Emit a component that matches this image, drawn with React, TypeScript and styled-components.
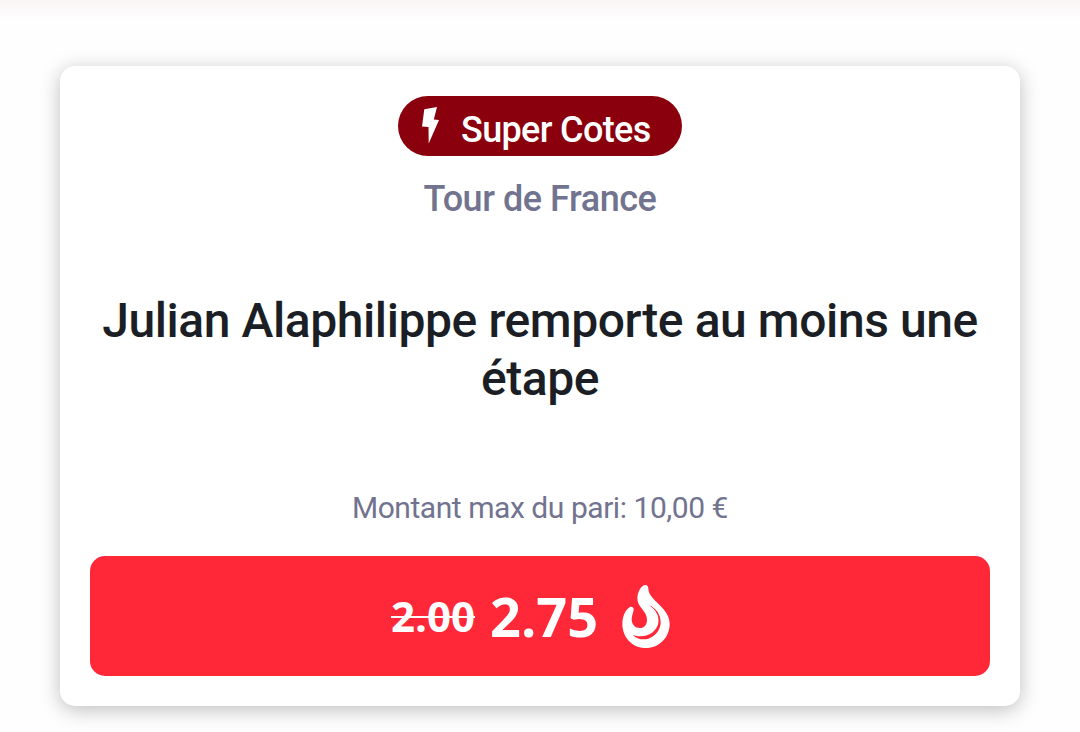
import styled, { createGlobalStyle } from 'styled-components';

const GlobalStyle = createGlobalStyle`
  *,
  *::before,
  *::after {
    box-sizing: border-box;
  }

  body {
    margin: 0;
    background-color: #fefefe;
    font-family: Roboto, 'Liberation Sans', sans-serif;
    overflow: hidden;
  }
`;

const Wrapper = styled.main`
  width: 1080px;
  height: 732px;
  padding: 66px 60px 26px;
  background-image: linear-gradient(#faf5f4, #fefefe 20px);
`;

const Card = styled.article`
  height: 640px;
  padding: 30px;
  display: flex;
  flex-direction: column;
  align-items: center;
  text-align: center;
  background-color: #ffffff;
  border-radius: 15px;
  box-shadow: 0 4px 20px rgba(0, 0, 0, 0.25);
`;

const Badge = styled.div`
  width: 284px;
  height: 60px;
  padding-left: 23px;
  display: flex;
  align-items: center;
  color: #ffffff;
  background-color: #8a000c;
  border-radius: 30px;
`;

const BadgeLabel = styled.span`
  margin: 7px 0 0 22px;
  font-size: 36px;
  font-weight: 500;
  line-height: 42px;
  letter-spacing: -0.65px;
  white-space: nowrap;
`;

const Competition = styled.p`
  margin: 22px 0 0;
  color: #71738f;
  font-size: 36px;
  font-weight: 500;
  line-height: 42px;
  letter-spacing: -0.45px;
`;

const Title = styled.h2`
  margin: 72px 0 0;
  color: #1b1f25;
  font-size: 48px;
  font-weight: 500;
  line-height: 58px;
  letter-spacing: -0.42px;
`;

const MaxStake = styled.p`
  margin: 82px 0 0;
  color: #71738f;
  font-size: 30px;
  font-weight: 400;
  line-height: 36px;
  letter-spacing: -0.45px;
`;

const OddsButton = styled.button`
  width: 100%;
  height: 120px;
  margin-top: auto;
  padding: 0 18px 0 0;
  display: flex;
  align-items: center;
  justify-content: center;
  color: #ffffff;
  font-family: 'Open Sans', 'Noto Sans', sans-serif;
  font-weight: 700;
  background-color: #ff2839;
  border: none;
  border-radius: 15px;
`;

const OldOdds = styled.s`
  font-size: 42px;
  line-height: 60px;
  text-decoration-thickness: 2px;
`;

const BoostedOdds = styled.span`
  margin: 0 23px 0 15px;
  font-size: 54px;
  line-height: 74px;
`;

const BoltIcon = () => (
  <svg width="18" height="38" viewBox="0 0 18 38" fill="currentColor" aria-hidden="true">
    <path d="M3.3 2.2 16 0l-3.2 12.6 5.2.4L7.7 36.5 7.5 20 1 19.6Z" />
  </svg>
);

const FlameIcon = () => (
  <svg width="50" height="65" viewBox="33 27 150 195" fill="currentColor" aria-hidden="true">
    <path d="M104 30C94 32 82 51 82 70c0 27 29 38 29 64 0 16-9 25-21 25-15 0-25-10-25-27 0-12 6-19 6-29 0-6-6-10-11-7-14 8-23 29-23 50 0 41 30 73 70 73 41 0 72-32 72-73 0-49-63-70-64-105 0-7-4-12-10-11Z" />
    <path
      d="M118 91c20 15 30 31 27 52-4 29-41 51-77 36 11 13 31 17 47 12 22-7 37-27 37-49 0-23-13-41-34-51Z"
      fill="#ff2839"
    />
  </svg>
);

const App = () => {
  return (
    <>
      <GlobalStyle />
      <Wrapper>
        <Card>
          <Badge>
            <BoltIcon />
            <BadgeLabel>Super Cotes</BadgeLabel>
          </Badge>
          <Competition>Tour de France</Competition>
          <Title>Julian Alaphilippe remporte au moins une étape</Title>
          <MaxStake>Montant max du pari: 10,00 €</MaxStake>
          <OddsButton type="button">
            <OldOdds>2.00</OldOdds>
            <BoostedOdds>2.75</BoostedOdds>
            <FlameIcon />
          </OddsButton>
        </Card>
      </Wrapper>
    </>
  );
};

export default App;
